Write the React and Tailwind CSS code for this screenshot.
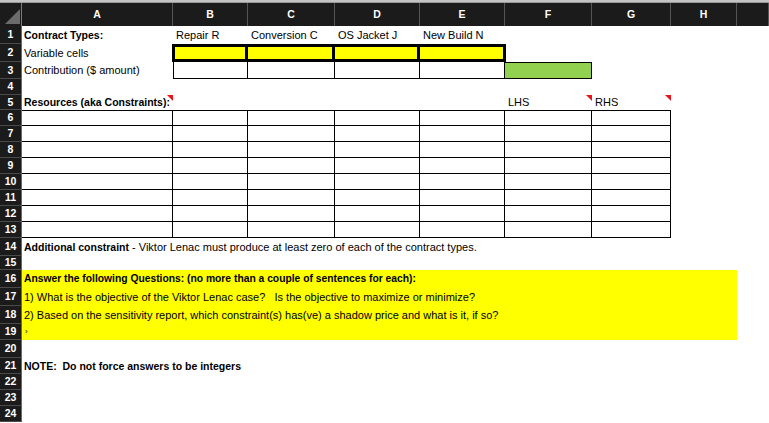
import React from "react";

const COLS =
  "grid grid-cols-[22px_151px_75px_87px_85px_85px_87px_79px_66px_1fr]";

const letters = ["A", "B", "C", "D", "E", "F", "G", "H", ""];

// row heights by row number
const heights = {
  1: "h-[18px]",
  2: "h-[18px]",
  3: "h-[17px]",
  4: "h-[16px]",
  5: "h-[15px]",
  14: "h-[18px]",
  15: "h-[14px]",
  16: "h-[18px]",
  17: "h-[18px]",
  18: "h-[18px]",
  19: "h-[16px]",
  20: "h-[18px]",
};

function RowNum({ n }) {
  return (
    <div className="bg-[#1b1b1b] text-white font-bold text-[10.5px] flex items-center justify-center border-b border-[#4a4a4a] border-r border-r-[#6a6a6a]">
      {n}
    </div>
  );
}

function Flag() {
  return (
    <div className="absolute top-0 right-0 w-0 h-0 border-l-[6px] border-l-transparent border-t-[6px] border-t-[#e8141b]" />
  );
}

function Row({ n, children }) {
  return (
    <div className={`${COLS} ${heights[n] || "h-[16px]"}`}>
      <RowNum n={n} />
      {children}
    </div>
  );
}

function App() {
  const tableRows = [6, 7, 8, 9, 10, 11, 12, 13];

  return (
    <div
      className="w-[769px] h-[423px] overflow-hidden bg-white text-black text-[11px] leading-none"
      style={{ fontFamily: '"Liberation Sans", Arial, sans-serif' }}
    >
      {/* TOP STRIP */}
      <div className="h-[3px] bg-[#c4c4c4] border-b border-[#9a9a9a]" />

      {/* COLUMN HEADERS */}
      <div className={`${COLS} h-[23px] bg-[#1b1b1b]`}>
        <div className="relative border-r border-[#7a7a7a] overflow-hidden">
          <svg
            width="22"
            height="23"
            viewBox="0 0 22 23"
            className="absolute left-0 top-0"
          >
            <polygon points="20,6 20,21 5,21" fill="#6b6b6b" />
          </svg>
        </div>
        {letters.map((l, i) => (
          <div
            key={i}
            className="flex items-center justify-center text-white font-bold text-[10.5px] border-r border-[#555]"
          >
            {l}
          </div>
        ))}
      </div>

      {/* ROW 1 */}
      <Row n={1}>
        <div className="flex items-center pl-[2px] font-bold text-[10.5px]">
          Contract Types:
        </div>
        <div className="flex items-center pl-[3px]">Repair R</div>
        <div className="flex items-center pl-[3px]">Conversion C</div>
        <div className="flex items-center pl-[3px]">OS Jacket J</div>
        <div className="flex items-center pl-[3px]">New Build N</div>
      </Row>

      {/* ROW 2 */}
      <Row n={2}>
        <div className="flex items-center pl-[2px]">Variable cells</div>
        <div className="bg-[#ffff00] border-[3px] border-black -ml-[1px]" />
        <div className="bg-[#ffff00] border-y-[3px] border-r-[3px] border-black" />
        <div className="bg-[#ffff00] border-y-[3px] border-r-[3px] border-black" />
        <div className="bg-[#ffff00] border-y-[3px] border-r-[3px] border-black -mr-[1px]" />
      </Row>

      {/* ROW 3 */}
      <Row n={3}>
        <div className="flex items-center pl-[2px]">
          Contribution ($ amount)
        </div>
        <div className="border-x border-b border-black" />
        <div className="border-r border-b border-black" />
        <div className="border-r border-b border-black" />
        <div className="border-r border-b border-black" />
        <div className="bg-[#92d050] border border-l-0 border-black" />
      </Row>

      {/* ROW 4 */}
      <Row n={4} />

      {/* ROW 5 */}
      <Row n={5}>
        <div className="relative flex items-center pl-[2px] font-bold text-[10.5px]">
          Resources (aka Constraints):
          <Flag />
        </div>
        <div />
        <div />
        <div />
        <div />
        <div className="relative flex items-center pl-[3px]">
          LHS
          <Flag />
        </div>
        <div className="relative flex items-center pl-[3px]">
          RHS
          <Flag />
        </div>
      </Row>

      {/* ROWS 6-13 */}
      {tableRows.map((n) => (
        <Row key={n} n={n}>
          {[0, 1, 2, 3, 4, 5, 6].map((c) => (
            <div
              key={c}
              className={`border-b border-r border-black ${
                n === 6 ? "border-t" : ""
              }`}
            />
          ))}
        </Row>
      ))}

      {/* ROW 14 */}
      <Row n={14}>
        <div className="col-span-9 flex items-center pl-[2px] whitespace-nowrap">
          <span className="font-bold text-[10.5px]">Additional constraint</span>
          <span>
            &nbsp;- Viktor Lenac must produce at least zero of each of the
            contract types.
          </span>
        </div>
      </Row>

      <Row n={15} />

      {/* QUESTIONS */}
      <Row n={16}>
        <div className="col-span-8 bg-[#ffff00] flex items-center pl-[2px] font-bold text-[10.3px] whitespace-nowrap">
          Answer the following Questions: (no more than a couple of sentences
          for each):
        </div>
      </Row>
      <Row n={17}>
        <div className="col-span-8 bg-[#ffff00] flex items-center pl-[2px] whitespace-pre">
          {
            "1) What is the objective of the Viktor Lenac case?   Is the objective to maximize or minimize?"
          }
        </div>
      </Row>
      <Row n={18}>
        <div className="col-span-8 bg-[#ffff00] flex items-center pl-[2px] whitespace-nowrap">
          2) Based on the sensitivity report, which constraint(s) has(ve) a
          shadow price and what is it, if so?
        </div>
      </Row>
      <Row n={19}>
        <div className="col-span-8 bg-[#ffff00] flex items-center pl-[3px] text-[8px]">
          ›
        </div>
      </Row>

      <Row n={20} />

      <Row n={21}>
        <div className="col-span-9 flex items-center pl-[2px] font-bold text-[10.5px] whitespace-pre">
          {"NOTE:  Do not force answers to be integers"}
        </div>
      </Row>

      <Row n={22} />
      <Row n={23} />
      <Row n={24} />
    </div>
  );
}

export default App;
